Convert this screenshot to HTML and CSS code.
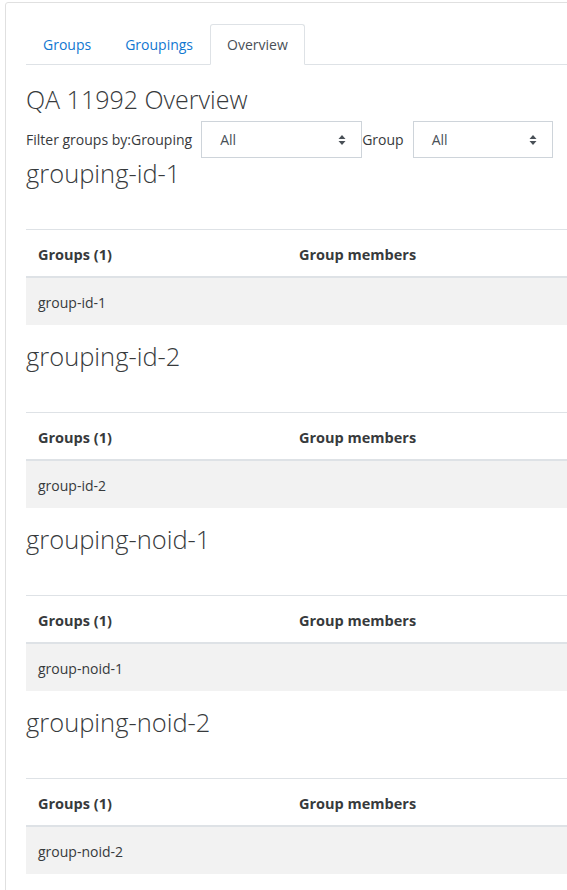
FILE: index.html
```html
<!DOCTYPE html>
<html>
<head>
    <title>QA 11992 Overview</title>
    <link rel="stylesheet" href="styles.css">
</head>
<body>
    <div class="card">
        <div class="card-body">
            <!-- Tabs -->
            <ul class="nav-tabs">
                <li><a class="nav-link" href="#">Groups</a></li>
                <li><a class="nav-link" href="#">Groupings</a></li>
                <li><a class="nav-link active" href="#">Overview</a></li>
            </ul>

            <h2>QA 11992 Overview</h2>

            <form class="filter-form">
                <span class="filter-label">Filter groups by:Grouping</span>
                <div class="select select-grouping">
                    <span>All</span>
                    <svg class="caret" width="8" height="12" viewBox="0 0 8 12">
                        <path d="M4 1 L7.5 5 L0.5 5 Z M4 11 L7.5 7 L0.5 7 Z" fill="#495057"/>
                    </svg>
                </div>
                <span class="filter-label">Group</span>
                <div class="select select-group">
                    <span>All</span>
                    <svg class="caret" width="8" height="12" viewBox="0 0 8 12">
                        <path d="M4 1 L7.5 5 L0.5 5 Z M4 11 L7.5 7 L0.5 7 Z" fill="#495057"/>
                    </svg>
                </div>
            </form>

            <h3>grouping-id-1</h3>
            <table class="groups-table">
                <thead>
                    <tr><th class="col-groups">Groups (1)</th><th>Group members</th></tr>
                </thead>
                <tbody>
                    <tr><td>group-id-1</td><td></td></tr>
                </tbody>
            </table>

            <h3>grouping-id-2</h3>
            <table class="groups-table">
                <thead>
                    <tr><th class="col-groups">Groups (1)</th><th>Group members</th></tr>
                </thead>
                <tbody>
                    <tr><td>group-id-2</td><td></td></tr>
                </tbody>
            </table>

            <h3>grouping-noid-1</h3>
            <table class="groups-table">
                <thead>
                    <tr><th class="col-groups">Groups (1)</th><th>Group members</th></tr>
                </thead>
                <tbody>
                    <tr><td>group-noid-1</td><td></td></tr>
                </tbody>
            </table>

            <h3>grouping-noid-2</h3>
            <table class="groups-table">
                <thead>
                    <tr><th class="col-groups">Groups (1)</th><th>Group members</th></tr>
                </thead>
                <tbody>
                    <tr><td>group-noid-2</td><td></td></tr>
                </tbody>
            </table>
        </div>
    </div>
</body>
</html>
```

FILE: styles.css
```css
body {
    margin: 0;
    padding: 3px 0 0 5px;
    overflow: hidden;
    background: #ffffff;
    font-family: "Open Sans", "Noto Sans", sans-serif;
    font-size: 14px;
    line-height: 22.5px;
    color: #373a3c;
}

.card {
    width: 700px;
    margin-top: -1px;
    border: 1px solid #e0e0e0;
    border-radius: 3px;
    background: #ffffff;
}

.card-body {
    padding: 21px 20px 40px 20px;
}

/* Tabs */
.nav-tabs {
    display: flex;
    list-style: none;
    margin: 0;
    padding: 0;
    border-bottom: 1px solid #dee2e6;
}

.nav-tabs li {
    margin-bottom: -1px;
}

.nav-link {
    display: block;
    padding: 9px 16px 7px 16px;
    border: 1px solid transparent;
    border-radius: 3px 3px 0 0;
    color: #1177d1;
    text-decoration: none;
}

.nav-link.active {
    color: #495057;
    background: #ffffff;
    border-color: #dee2e6 #dee2e6 #ffffff;
}

h2 {
    margin: 19px 0 6px 0;
    font-size: 25px;
    font-weight: 300;
    line-height: 31.2px;
    color: #373a3c;
}

h3 {
    margin: 0 0 39.5px 0;
    font-size: 25.5px;
    font-weight: 300;
    line-height: 31.5px;
    color: #373a3c;
}

/* Filter row */
.filter-form {
    display: flex;
    align-items: center;
}

.filter-label {
    margin-right: 9px;
    padding-top: 2px;
}

.select {
    display: flex;
    align-items: center;
    justify-content: space-between;
    box-sizing: border-box;
    height: 37px;
    padding: 2px 15px 0 18px;
    border: 1px solid #ced4da;
    color: #495057;
}

.select-grouping {
    width: 161px;
}

.select-group {
    width: 140px;
}

.caret {
    display: block;
}

/* Tables */
.groups-table {
    width: 100%;
    margin-bottom: 16px;
    border-collapse: collapse;
}

.groups-table th,
.groups-table td {
    padding: 14px 12px 10px 12px;
    text-align: left;
    vertical-align: top;
    border-top: 1px solid #dee2e6;
}

.groups-table th {
    font-size: 14.5px;
    font-weight: 700;
    border-bottom: 2px solid #dee2e6;
}

.col-groups {
    width: 237px;
}

.groups-table tbody tr {
    background: #f2f2f2;
}
```
